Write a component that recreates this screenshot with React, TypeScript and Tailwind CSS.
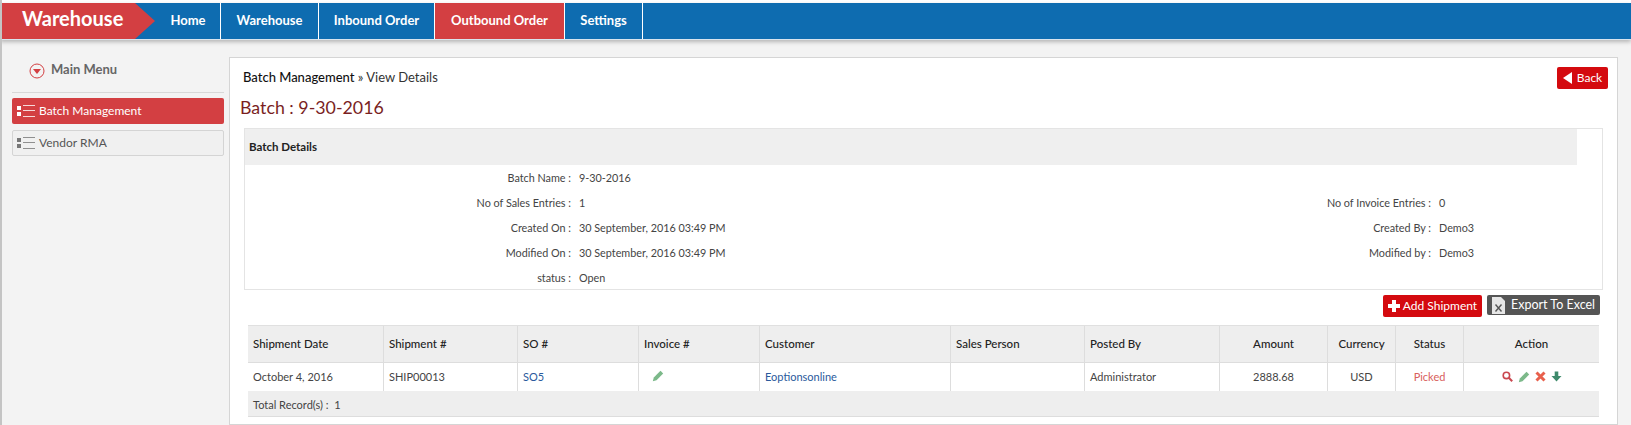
import React from "react";

const Burger = ({ c }: { c: string }) => (
  <svg width="18" height="14" viewBox="0 0 18 14" className="shrink-0">
    <rect x="0" y="2" width="4" height="4" fill={c} />
    <rect x="0" y="8" width="4" height="4" fill={c} />
    <rect x="6" y="1" width="12" height="1" fill={c} opacity="0.8" />
    <rect x="6" y="6" width="12" height="1" fill={c} opacity="0.8" />
    <rect x="6" y="12" width="12" height="1" fill={c} opacity="0.8" />
  </svg>
);

const Pencil = ({ c = "#7cb98a" }: { c?: string }) => (
  <svg width="12" height="12" viewBox="0 0 12 12">
    <path d="M8.5 0.8 L11.2 3.5 L4.5 10.2 L0.8 11.2 L1.8 7.5 Z" fill={c} />
  </svg>
);

const Lens = () => (
  <svg width="11" height="11" viewBox="0 0 11 11">
    <circle cx="4.4" cy="4.4" r="3.2" fill="none" stroke="#c9474f" strokeWidth="1.6" />
    <path d="M6.8 6.8 L10.2 10.2" stroke="#c9474f" strokeWidth="2" />
  </svg>
);

const Cross = () => (
  <svg width="11" height="11" viewBox="0 0 11 11">
    <path d="M1.5 1.5 L9.5 9.5 M9.5 1.5 L1.5 9.5" stroke="#e8604c" strokeWidth="3" />
  </svg>
);

const Down = () => (
  <svg width="11" height="11" viewBox="0 0 11 11">
    <path d="M3.7 0.5 H7.3 V5 H10.5 L5.5 10.5 L0.5 5 H3.7 Z" fill="#3e8a6b" />
  </svg>
);

const nav = [
  { t: "Home", w: "w-[65px]", active: false },
  { t: "Warehouse", w: "w-[98px]", active: false },
  { t: "Inbound Order", w: "w-[116px]", active: false },
  { t: "Outbound Order", w: "w-[130px]", active: true },
  { t: "Settings", w: "w-[78px]", active: false },
];

const details = [
  ["Batch Name :", "9-30-2016", "", ""],
  ["No of Sales Entries :", "1", "No of Invoice Entries :", "0"],
  ["Created On :", "30 September, 2016 03:49 PM", "Created By :", "Demo3"],
  ["Modified On :", "30 September, 2016 03:49 PM", "Modified by :", "Demo3"],
  ["status :", "Open", "", ""],
];

const cols = "grid grid-cols-[136px_134px_121px_121px_191px_134px_135px_108px_68px_68px_135px]";
const cell = "border-r border-[#dddddd] px-[5px] flex items-center";

export default function App() {
  return (
    <div className="h-[425px] w-[1631px] overflow-hidden bg-[#f3f3f3] text-[12px] text-[#333333] font-['Lato','Liberation_Sans',sans-serif] border-l-2 border-[#c4c4c4] flex flex-col">
      <div className="h-[3px] bg-white -ml-[2px]" />
      <header className="h-[37px] -ml-[2px] bg-[#0e6cb0] flex shadow-[0_2px_4px_rgba(0,0,0,0.25)] border-b border-[#d8e4ee] shrink-0">
        <div className="relative w-[135px] bg-[#d33f42] text-white font-bold text-[20px] pl-[22px] leading-[30px] shrink-0">
          Warehouse
          <div className="absolute left-[135px] top-0 border-y-[18px] border-y-transparent border-l-[20px] border-l-[#d33f42]" />
        </div>
        <nav className="flex pl-[21px] text-white font-bold text-[13px]">
          {nav.map((n) => (
            <div
              key={n.t}
              className={`${n.w} flex items-center justify-center border-r border-white ${n.active ? "bg-[#d33f42]" : ""}`}
            >
              {n.t}
            </div>
          ))}
        </nav>
      </header>

      <div className="flex flex-1 min-h-0">
        <aside className="w-[227px] shrink-0 pt-[20px] pl-[10px] pr-[5px]">
          <div className="flex items-center pl-[17px] h-[20px] mb-[12px] text-[#666666] font-bold text-[13px]">
            <svg width="16" height="16" viewBox="0 0 16 16" className="mr-[6px] mt-[1px]">
              <circle cx="8" cy="8" r="7" fill="none" stroke="#d33f42" strokeWidth="1" />
              <path d="M4 6 H12 L8 11 Z" fill="#d33f42" />
            </svg>
            Main Menu
          </div>
          <div className="border-t border-[#d8d8d8] mb-[5px]" />
          <div className="h-[26px] rounded-[2px] bg-[#d33f42] text-white flex items-center pl-[5px] gap-[4px] mb-[6px]">
            <Burger c="#ffffff" />
            Batch Management
          </div>
          <div className="h-[26px] rounded-[2px] bg-[#f0f0f0] border border-[#d4d4d4] text-[#555555] flex items-center pl-[4px] gap-[4px]">
            <Burger c="#777777" />
            Vendor RMA
          </div>
        </aside>

        <main className="mt-[17px] w-[1389px] bg-white border border-[#d5d5d5] pl-[10px] pr-[9px] flex flex-col shrink-0">
          <div className="flex justify-between items-start pt-[9px]">
            <div className="pl-[3px] pt-[2px] pb-[1px] text-[13px] leading-[16px]">
              <span className="font-medium text-[#111111]">Batch Management</span>
              <span className="text-[#333333]"> » View Details</span>
            </div>
            <button className="h-[22px] w-[51px] rounded-[2px] bg-[#d40a0f] text-white flex items-center justify-center gap-[5px] text-[12px]">
              <svg width="9" height="12" viewBox="0 0 9 12"><path d="M9 0 V12 L0 6 Z" fill="#ffffff" /></svg>
              Back
            </button>
          </div>
          <h1 className="text-[17.8px] leading-[24px] text-[#7a1f1f] mt-[6px]">Batch : 9-30-2016</h1>

          <section className="mt-[9px] ml-[4px] w-[1359px] h-[162px] border border-[#e4e4e4] shrink-0">
            <div className="h-[36px] w-[1332px] bg-[#efefef] flex items-center pl-[4px] font-bold text-[11.5px] text-[#222222]">
              Batch Details
            </div>
            <div className="pt-[1px]">
              {details.map((r) => (
                <div key={r[0]} className="grid grid-cols-[326px_660px_200px_1fr] h-[25px] items-center text-[10.8px] text-[#444444]">
                  <div className="text-right">{r[0]}</div>
                  <div className="pl-[8px]">{r[1]}</div>
                  <div className="text-right">{r[2]}</div>
                  <div className="pl-[8px]">{r[3]}</div>
                </div>
              ))}
            </div>
          </section>

          <div className="flex justify-end gap-[5px] mt-[5px] w-[1360px] h-[30px] items-start shrink-0">
            <button className="h-[22px] w-[99px] rounded-[2px] bg-[#d40a0f] text-white flex items-center justify-center gap-[3px] text-[12px]">
              <svg width="12" height="12" viewBox="0 0 12 12"><path d="M4 0 H8 V4 H12 V8 H8 V12 H4 V8 H0 V4 H4 Z" fill="#ffffff" /></svg>
              Add Shipment
            </button>
            <button className="h-[20px] w-[113px] rounded-[2px] bg-[#555555] text-white flex items-center justify-center gap-[6px] text-[12.5px]">
              <svg width="13" height="17" viewBox="0 0 13 17">
                <path d="M0 0 H9 L13 4 V17 H0 Z" fill="#e6e6e6" />
                <path d="M3.5 7.5 L9.5 14.5 M9.5 7.5 L3.5 14.5" stroke="#555555" strokeWidth="1.4" />
              </svg>
              Export To Excel
            </button>
          </div>

          <div className="ml-[8px] w-[1351px] text-[11px] shrink-0">
            <div className={`${cols} h-[38px] bg-[#eeeeee] border-t border-[#e0e0e0] border-b border-b-[#dddddd] font-medium text-[11.5px] text-[#222222]`}>
              <div className={cell}>Shipment Date</div>
              <div className={cell}>Shipment #</div>
              <div className={cell}>SO #</div>
              <div className={cell}>Invoice #</div>
              <div className={cell}>Customer</div>
              <div className={cell}>Sales Person</div>
              <div className={cell}>Posted By</div>
              <div className={`${cell} justify-center`}>Amount</div>
              <div className={`${cell} justify-center`}>Currency</div>
              <div className={`${cell} justify-center`}>Status</div>
              <div className="flex items-center justify-center">Action</div>
            </div>
            <div className={`${cols} h-[28px] bg-white text-[#444444]`}>
              <div className={cell}>October 4, 2016</div>
              <div className={cell}>SHIP00013</div>
              <div className={`${cell} text-[#2a5a9c]`}>SO5</div>
              <div className={`${cell} pl-[13px] pb-[3px]`}><Pencil /></div>
              <div className={`${cell} text-[#2a5a9c]`}>Eoptionsonline</div>
              <div className={cell}></div>
              <div className={cell}>Administrator</div>
              <div className={`${cell} justify-center`}>2888.68</div>
              <div className={`${cell} justify-center`}>USD</div>
              <div className={`${cell} justify-center text-[#d9605c]`}>Picked</div>
              <div className="flex items-center justify-center gap-[5px] pb-[1px]">
                <Lens />
                <Pencil />
                <Cross />
                <Down />
              </div>
            </div>
            <div className="h-[26px] bg-[#eeeeee] border-b border-[#dddddd] flex items-center pl-[5px] pt-[3px] text-[#444444]">
              Total Record(s) :&nbsp; 1
            </div>
          </div>
        </main>
      </div>
    </div>
  );
}
